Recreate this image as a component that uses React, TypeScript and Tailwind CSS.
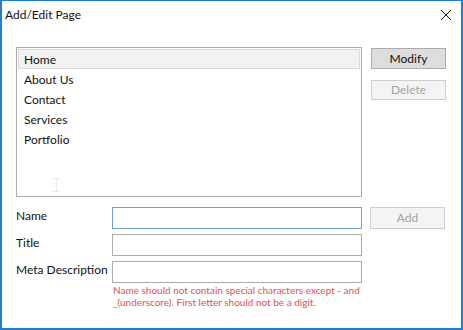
import React from 'react'

const pages = ['Home', 'About Us', 'Contact', 'Services', 'Portfolio']

export default function App() {
    return (
        <div
            className="w-[463px] h-[330px] bg-white border-x-2 border-b-2 border-t border-[#1c7fd3] flex flex-col text-[#111] text-[12px] overflow-hidden"
            style={{ fontFamily: 'Lato, "Open Sans", sans-serif' }}
        >
            {/* Title bar */}
            <div className="h-[28px] flex items-center justify-between pl-[3px] pr-[6px] shrink-0">
                <span className="text-[12px] leading-none">Add/Edit Page</span>
                <svg width="12" height="12" viewBox="0 0 12 12" className="mr-[3px]">
                    <path d="M1 1 L11 11 M11 1 L1 11" stroke="#111" strokeWidth="1" />
                </svg>
            </div>

            <div className="flex flex-col pl-[14px] pt-[18px]">
                {/* List + buttons */}
                <div className="flex">
                    <div className="relative w-[346px] h-[150px] border border-[#acacac] p-[1px]">
                        {pages.map((p, i) => (
                            <div
                                key={p}
                                className={`h-[20px] flex items-center pl-[5px] pt-[1px] ${i === 0 ? 'bg-[#f2f2f2] border border-[#d9d9d9] w-[342px]' : 'border border-transparent'}`}
                            >
                                {p}
                            </div>
                        ))}
                        {/* mouse cursor */}
                        <svg width="7" height="14" viewBox="0 0 7 14" className="absolute left-[36px] top-[130px] opacity-20">
                            <path d="M0.5 0.5 H6.5 M3.5 0.5 V13.5 M0.5 13.5 H6.5" stroke="#999" strokeWidth="1" fill="none" />
                        </svg>
                    </div>
                    <div className="flex flex-col ml-[9px] gap-[11px] pt-[1px]">
                        <button className="w-[75px] h-[21px] bg-[#dddddd] border border-[#adadad] text-[12px] leading-none">
                            Modify
                        </button>
                        <button className="w-[75px] h-[20px] bg-[#f4f4f4] border border-[#cfcfcf] text-[#a3a3a3] text-[12px] leading-none">
                            Delete
                        </button>
                    </div>
                </div>

                {/* Form */}
                <div className="flex mt-[10px]">
                    <div className="flex flex-col w-[96px] gap-[5px]">
                        <div className="h-[22px] flex items-center pb-[5px] whitespace-nowrap">Name</div>
                        <div className="h-[22px] flex items-center pb-[5px] whitespace-nowrap">Title</div>
                        <div className="h-[22px] flex items-center pb-[5px] whitespace-nowrap">Meta Description</div>
                    </div>
                    <div className="flex flex-col w-[250px] gap-[5px]">
                        <div className="h-[22px] border border-[#6e9ed4] bg-white" />
                        <div className="h-[22px] border border-[#acacac] bg-white" />
                        <div className="h-[22px] border border-[#acacac] bg-white" />
                        <div className="text-[#e0524f] text-[10px] leading-[12px] pl-[1px] -mt-[4px] whitespace-nowrap">
                            Name should not contain special characters except - and
                            <br />
                            _(underscore). First letter should not be a digit.
                        </div>
                    </div>
                    <div className="ml-[8px]">
                        <button className="w-[75px] h-[22px] bg-[#f4f4f4] border border-[#cfcfcf] text-[#a3a3a3] text-[12px] leading-none">
                            Add
                        </button>
                    </div>
                </div>
            </div>
        </div>
    )
}
